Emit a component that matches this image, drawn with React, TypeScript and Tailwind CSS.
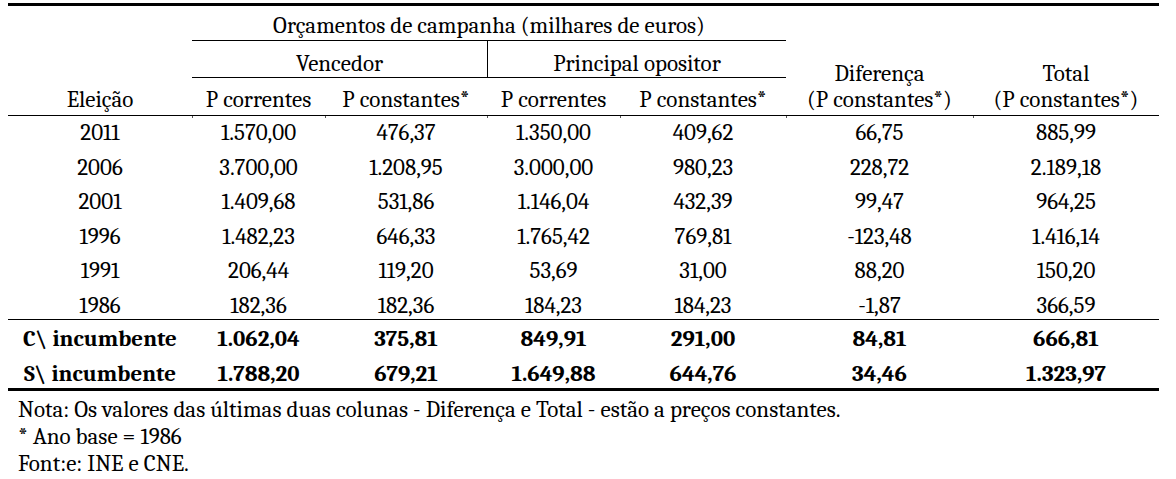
import React from "react";

const cols = "grid grid-cols-[184px_133px_162px_133px_166px_187px_186px]";

const rows = [
  ["2011", "1.570,00", "476,37", "1.350,00", "409,62", "66,75", "885,99"],
  ["2006", "3.700,00", "1.208,95", "3.000,00", "980,23", "228,72", "2.189,18"],
  ["2001", "1.409,68", "531,86", "1.146,04", "432,39", "99,47", "964,25"],
  ["1996", "1.482,23", "646,33", "1.765,42", "769,81", "-123,48", "1.416,14"],
  ["1991", "206,44", "119,20", "53,69", "31,00", "88,20", "150,20"],
  ["1986", "182,36", "182,36", "184,23", "184,23", "-1,87", "366,59"],
];

const totals = [
  ["C\\ incumbente", "1.062,04", "375,81", "849,91", "291,00", "84,81", "666,81"],
  ["S\\ incumbente", "1.788,20", "679,21", "1.649,88", "644,76", "34,46", "1.323,97"],
];

function Ticks() {
  return (
    <div className={`${cols} h-[2px]`}>
      <div />
      {[0, 1, 2, 3, 4, 5].map((i) => (
        <div key={i} className="border-l border-[#555]" />
      ))}
    </div>
  );
}

function Cell({ children }: { children: React.ReactNode }) {
  return <div className="text-center">{children}</div>;
}

export default function App() {
  return (
    <div className="min-h-screen bg-white text-black font-serif text-[23px] leading-[26px]">
      <div className="ml-[8px] w-[1151px] pt-[3px]">
        <div className="h-[3px] bg-black" />

        {/* header */}
        <div className={`${cols} grid-rows-[35px_37px_37px] border-b border-black`}>
          <div className="col-start-2 col-span-4 row-start-1 border-b border-black flex items-end justify-center pb-[1px]">
            Orçamentos de campanha (milhares de euros)
          </div>
          <div className="col-start-2 col-span-2 row-start-2 border-b border-black flex items-end justify-center">
            Vencedor
          </div>
          <div className="col-start-4 col-span-2 row-start-2 border-b border-l border-black flex items-end justify-center">
            Principal opositor
          </div>
          <div className="col-start-6 row-start-2 row-span-2 flex flex-col items-center justify-end pb-[2px]">
            <span>Diferença</span>
            <span>(P constantes*)</span>
          </div>
          <div className="col-start-7 row-start-2 row-span-2 flex flex-col items-center justify-end pb-[2px]">
            <span>Total</span>
            <span>(P constantes*)</span>
          </div>
          <div className="col-start-1 row-start-3 flex items-end justify-center pb-[2px]">Eleição</div>
          <div className="col-start-2 row-start-3 flex items-end justify-center pb-[2px]">P correntes</div>
          <div className="col-start-3 row-start-3 flex items-end justify-center pb-[2px]">P constantes*</div>
          <div className="col-start-4 row-start-3 flex items-end justify-center pb-[2px]">P correntes</div>
          <div className="col-start-5 row-start-3 flex items-end justify-center pb-[2px]">P constantes*</div>
        </div>
        <Ticks />

        {/* body */}
        <div className="border-b border-black mt-[-2px]">
          {rows.map((r, i) => (
            <div key={r[0]} className={`${cols} ${i === rows.length - 1 ? "h-[30px]" : "h-[34.6px]"} pt-[4px]`}>
              {r.map((c, j) => (
                <Cell key={j}>{c}</Cell>
              ))}
            </div>
          ))}
        </div>

        {/* totals */}
        <div className="font-bold">
          {totals.map((r, i) => (
            <div key={r[0]} className={`${cols} h-[34px] ${i === 0 ? "pt-[6px]" : "pt-[7px]"}`}>
              {r.map((c, j) => (
                <Cell key={j}>{c}</Cell>
              ))}
            </div>
          ))}
        </div>
        <div className="h-[3px] bg-black" />

        {/* notes */}
        <div className="pl-[10px] pt-[5px] leading-[27px]">
          <p>Nota: Os valores das últimas duas colunas - Diferença e Total - estão a preços constantes.</p>
          <p>* Ano base = 1986</p>
          <p>Font:e: INE e CNE.</p>
        </div>
      </div>
    </div>
  );
}
